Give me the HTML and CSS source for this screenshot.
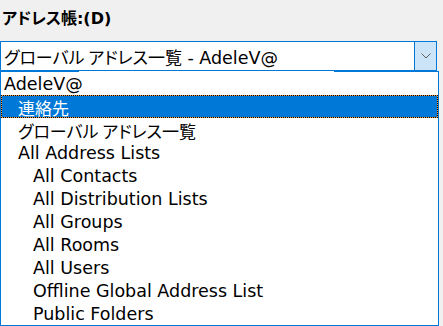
FILE: index.html
```html
<!DOCTYPE html>
<html lang="ja">
<head>
    <meta charset="UTF-8">
    <title>アドレス帳</title>
    <link rel="stylesheet" href="styles.css">
</head>
<body>
    <div class="field">
        <div class="label"><span class="ja">アドレス帳</span>:(D)</div>

        <div class="combo">
            <div class="comboText"><span class="ja">グローバル アドレス一覧</span> - AdeleV@</div>
            <div class="comboBtn">
                <svg width="10" height="6" viewBox="0 0 10 6">
                    <polyline points="0.5,0.5 5,5 9.5,0.5" fill="none" stroke="#606060" stroke-width="1"/>
                </svg>
            </div>
        </div>

        <ul class="list">
            <li class="lvl0">AdeleV@</li>
            <li class="lvl1 selected"><span class="ja">連絡先</span></li>
            <li class="lvl1"><span class="ja">グローバル アドレス一覧</span></li>
            <li class="lvl1">All Address Lists</li>
            <li class="lvl2">All Contacts</li>
            <li class="lvl2">All Distribution Lists</li>
            <li class="lvl2">All Groups</li>
            <li class="lvl2">All Rooms</li>
            <li class="lvl2">All Users</li>
            <li class="lvl2">Offline Global Address List</li>
            <li class="lvl2">Public Folders</li>
        </ul>
    </div>
</body>
</html>
```

FILE: styles.css
```css
* {
    box-sizing: border-box;
}

body {
    margin: 0;
    background: #f0f0f0;
    font-family: "DejaVu Sans", "Noto Sans CJK JP", sans-serif;
    font-size: 17.5px;
    color: #000;
}

.ja {
    font-family: "Noto Sans CJK JP", sans-serif;
    font-size: 17px;
    font-feature-settings: "palt";
}

.label {
    height: 41px;
    padding: 6px 2px 0;
    line-height: 22px;
    font-size: 16px;
    font-weight: bold;
}

.label .ja {
    font-size: 16px;
}

.combo {
    display: flex;
    width: 437px;
    height: 30px;
    background: #fff;
    border: 1px solid #0078d7;
}

.comboText {
    flex: 1;
    padding: 1px 0 0 3px;
    line-height: 27px;
    white-space: nowrap;
}

.comboBtn {
    width: 22px;
    display: flex;
    align-items: center;
    justify-content: center;
    background: #cce4f7;
    border-left: 1px solid #0078d7;
}

.list {
    list-style: none;
    margin: 0;
    width: 439px;
    padding: 1px 0 0;
    border: 1px solid #0078d7;
    border-top: none;
    background:
        linear-gradient(to right, #0078d7 78px, transparent 78px, transparent 333px, #0078d7 333px) top / 100% 1px no-repeat,
        #fff;
}

.list li {
    height: 23px;
    padding-top: 2px;
    line-height: 21px;
    white-space: nowrap;
}

.lvl0 {
    padding-left: 3px;
}

.lvl1 {
    padding-left: 17px;
}

.lvl2 {
    padding-left: 32px;
}

.selected {
    background: #0078d7;
    color: #fff;
    box-shadow: inset 0 0 0 1px #f59a3c;
    outline: 1px dotted #000;
    outline-offset: -1px;
}
```
